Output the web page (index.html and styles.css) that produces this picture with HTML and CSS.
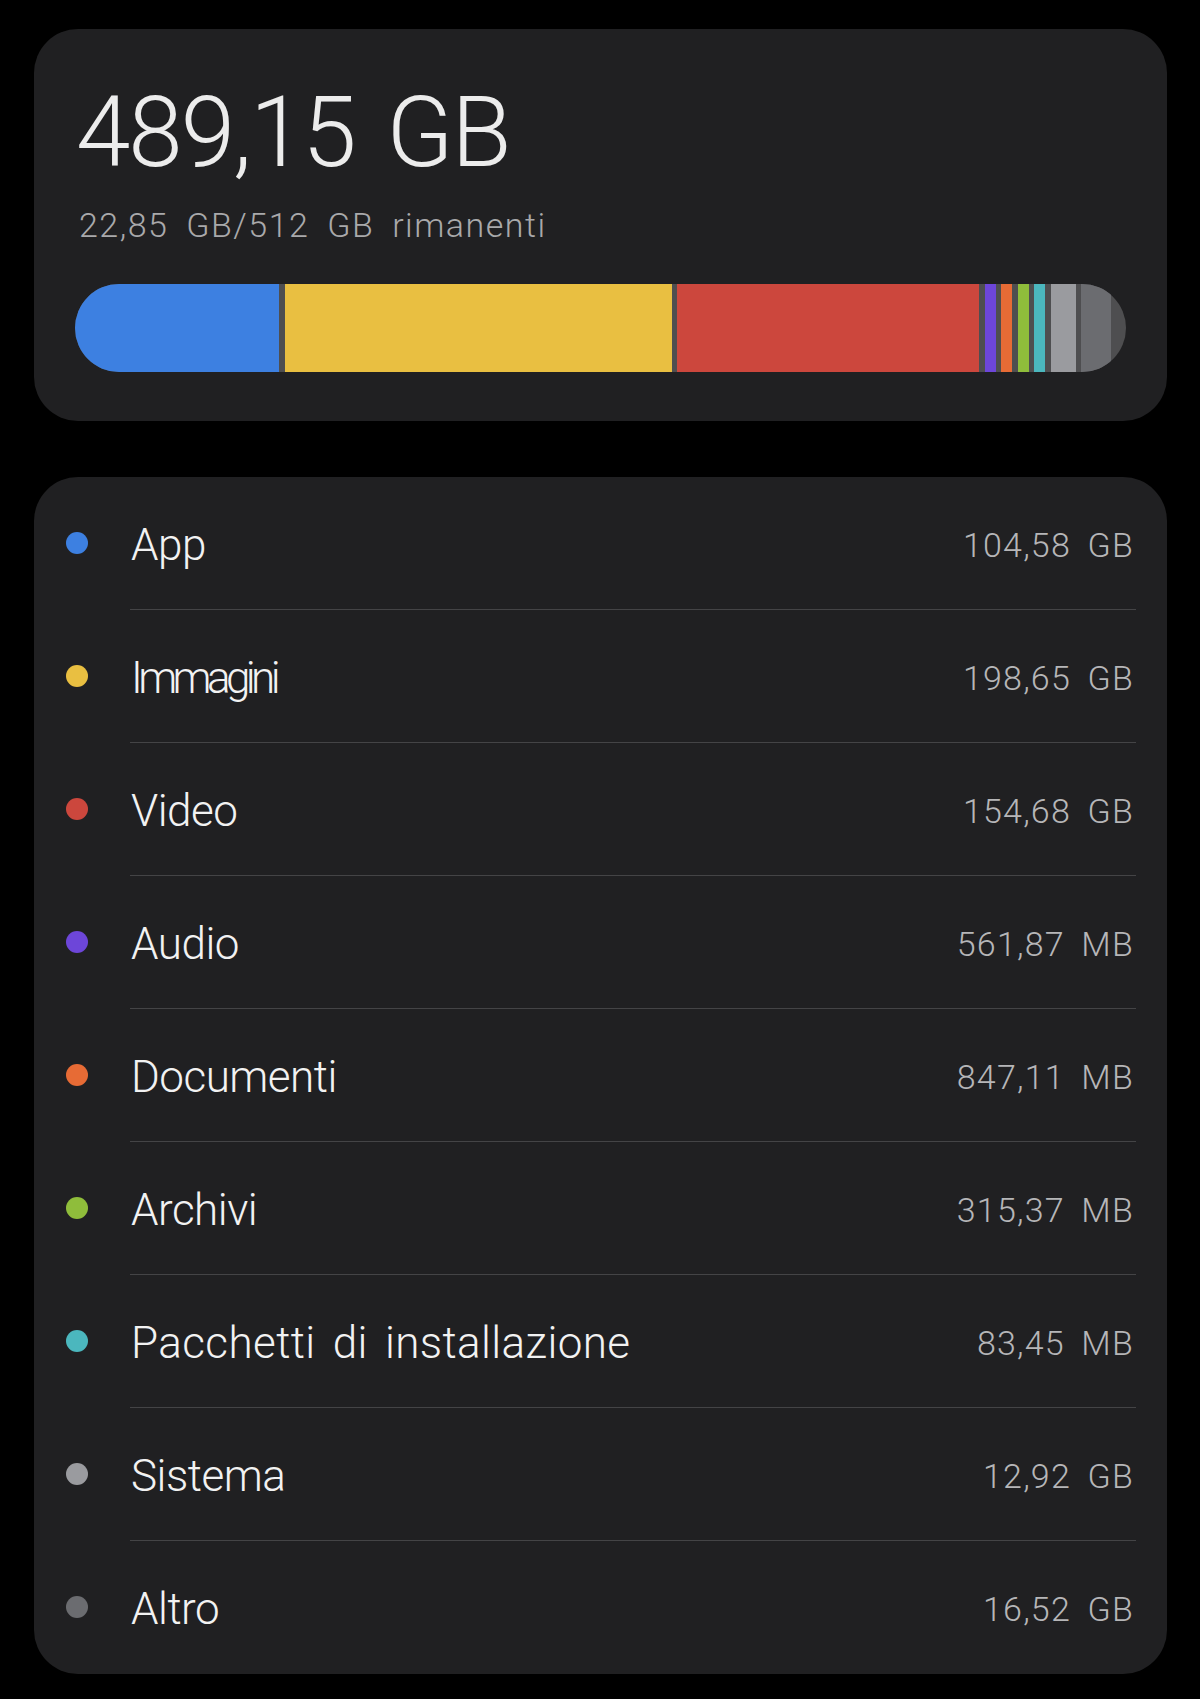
FILE: index.html
```html
<!DOCTYPE html>
<html lang="it">
<head>
<meta charset="utf-8">
<title>Memoria</title>
<link rel="stylesheet" href="styles.css">
</head>
<body>
<main class="page">
  <section class="card summary">
    <div class="total">489,15 GB</div>
    <div class="remaining">22,85 GB/512 GB rimanenti</div>
    <div class="bar">
      <span class="seg c-app" style="width:204px"></span>
      <span class="seg c-img" style="width:387px"></span>
      <span class="seg c-vid" style="width:302px"></span>
      <span class="seg c-aud" style="width:11px"></span>
      <span class="seg c-doc" style="width:11px"></span>
      <span class="seg c-arc" style="width:11px"></span>
      <span class="seg c-pkg" style="width:11px"></span>
      <span class="seg c-sys" style="width:25px"></span>
      <span class="seg c-oth" style="width:30px"></span>
    </div>
  </section>

  <section class="card list">
    <div class="row"><span class="dot c-app"></span><div class="content"><span class="label">App</span><span class="value">104,58 GB</span></div></div>
    <div class="row"><span class="dot c-img"></span><div class="content"><span class="label narrow">Immagini</span><span class="value">198,65 GB</span></div></div>
    <div class="row"><span class="dot c-vid"></span><div class="content"><span class="label">Video</span><span class="value">154,68 GB</span></div></div>
    <div class="row"><span class="dot c-aud"></span><div class="content"><span class="label">Audio</span><span class="value">561,87 MB</span></div></div>
    <div class="row"><span class="dot c-doc"></span><div class="content"><span class="label">Documenti</span><span class="value">847,11 MB</span></div></div>
    <div class="row"><span class="dot c-arc"></span><div class="content"><span class="label">Archivi</span><span class="value">315,37 MB</span></div></div>
    <div class="row"><span class="dot c-pkg"></span><div class="content"><span class="label wide">Pacchetti di installazione</span><span class="value">83,45 MB</span></div></div>
    <div class="row"><span class="dot c-sys"></span><div class="content"><span class="label">Sistema</span><span class="value">12,92 GB</span></div></div>
    <div class="row"><span class="dot c-oth"></span><div class="content"><span class="label">Altro</span><span class="value">16,52 GB</span></div></div>
  </section>
</main>
</body>
</html>
```

FILE: styles.css
```css
html, body {
  margin: 0;
  padding: 0;
  background: #000;
}

body {
  font-family: Roboto, "Liberation Sans", sans-serif;
  font-weight: 300;
  color: #eeeeee;
}

.page {
  padding: 29px 33px 0 34px;
  display: flex;
  flex-direction: column;
  gap: 56px;
}

.card {
  background: #202022;
  border-radius: 44px;
}

.summary {
  padding: 55px 41px 49px 41px;
}

.total {
  font-size: 98px;
  line-height: 98px;
  height: 98px;
  color: #ececec;
  margin-left: 1px;
  letter-spacing: -2px;
  word-spacing: 10px;
}

.remaining {
  margin-top: 23px;
  margin-left: 4px;
  font-size: 34px;
  line-height: 40px;
  height: 40px;
  color: #a9a9ab;
  letter-spacing: 1.5px;
  word-spacing: 8px;
}

.bar {
  margin-top: 39px;
  height: 88px;
  border-radius: 44px;
  background: #4e4e50;
  overflow: hidden;
  display: flex;
  gap: 5.5px;
}

.seg {
  display: block;
  height: 100%;
  flex: none;
}

.c-app { background: #3d80e1; }
.c-img { background: #e9bf41; }
.c-vid { background: #cc473d; }
.c-aud { background: #6d46d9; }
.c-doc { background: #e76b35; }
.c-arc { background: #8fbd3b; }
.c-pkg { background: #4bb7be; }
.c-sys { background: #9a9b9f; }
.c-oth { background: #6b6c70; }

.list {
  display: flex;
  flex-direction: column;
}

.row {
  display: flex;
  align-items: stretch;
  padding: 0 31px 0 32px;
}

.dot {
  flex: none;
  width: 22px;
  height: 22px;
  border-radius: 50%;
  align-self: flex-start;
  margin-top: 55px;
  margin-right: 42px;
}

.content {
  flex: 1;
  display: flex;
  align-items: center;
  justify-content: space-between;
  height: 128px;
  padding-top: 4px;
  border-bottom: 1px solid #444446;
}

.row:last-child .content {
  border-bottom: 1px solid transparent;
}

.label {
  font-size: 44px;
  color: #f2f2f2;
  margin-left: 1px;
  letter-spacing: -0.5px;
}

.label.narrow {
  letter-spacing: -4.6px;
}

.label.wide {
  letter-spacing: 0.4px;
  word-spacing: 6px;
}

.value {
  font-size: 34px;
  color: #b6b6b8;
  margin-right: 2px;
  letter-spacing: 1.2px;
  word-spacing: 7px;
}
```
